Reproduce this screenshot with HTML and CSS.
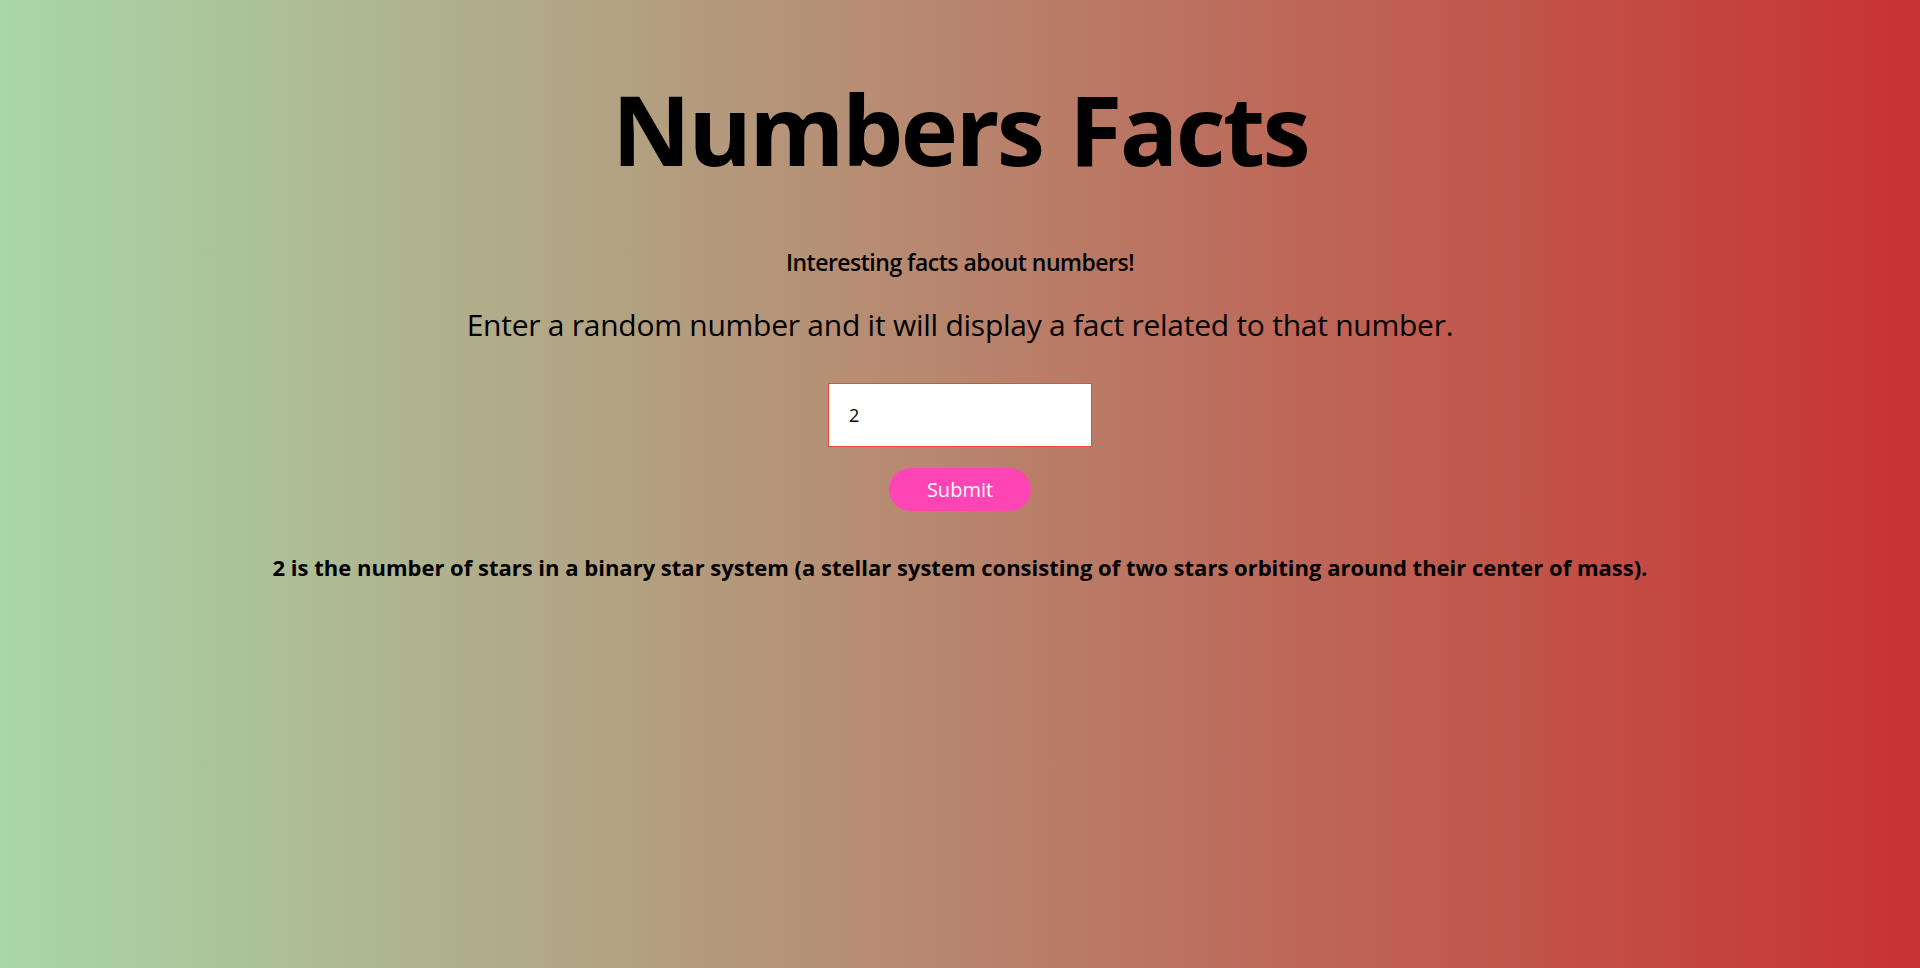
FILE: index.html
```html
<!DOCTYPE html>
<html lang="en">
<head>
<meta charset="utf-8">
<title>Numbers Facts</title>
<link rel="stylesheet" href="styles.css">
</head>
<body>
<main class="page">
  <h1 class="title">Numbers Facts</h1>
  <p class="subtitle">Interesting facts about numbers!</p>
  <p class="lead">Enter a random number and it will display a fact related to that number.</p>
  <form class="form">
    <input class="number-input" type="text" value="2">
    <button class="submit" type="button">Submit</button>
  </form>
  <p class="fact">2 is the number of stars in a binary star system (a stellar system consisting of two stars orbiting around their center of mass).</p>
</main>
</body>
</html>
```
FILE: styles.css
```css
html, body {
  margin: 0;
  padding: 0;
  height: 100%;
}
body {
  background: linear-gradient(to right, #a8d7a8 0%, #c83232 100%);
  font-family: "Open Sans", "Noto Sans", sans-serif;
  color: #000;
}
.page {
  display: flex;
  flex-direction: column;
  align-items: center;
  padding-top: 68px;
}
.title {
  margin: 0;
  font-size: 97px;
  line-height: 120px;
  font-weight: 700;
  letter-spacing: -2.6px;
  word-spacing: 4px;
}
.subtitle {
  margin: 60px 0 0;
  font-size: 23px;
  line-height: 29px;
  font-weight: 600;
  letter-spacing: -0.5px;
}
.lead {
  margin: 29px 0 0;
  font-size: 30px;
  line-height: 37px;
  font-weight: 400;
  letter-spacing: -0.25px;
}
.form {
  display: flex;
  flex-direction: column;
  align-items: center;
  margin-top: 40px;
}
.number-input {
  box-sizing: border-box;
  width: 264px;
  height: 64px;
  border: 1px solid #e84a3c;
  background: #fff;
  padding: 0 20px;
  font-family: "Open Sans", sans-serif;
  font-size: 18px;
  color: #000;
  outline: none;
}
.submit {
  margin-top: 21px;
  width: 142px;
  height: 43px;
  border: none;
  border-radius: 22px;
  background: #ff44b4;
  color: #fff;
  font-family: "Open Sans", sans-serif;
  font-size: 20px;
}
.fact {
  margin: 44px 0 0;
  font-size: 22px;
  line-height: 25px;
  font-weight: 700;
}
```
